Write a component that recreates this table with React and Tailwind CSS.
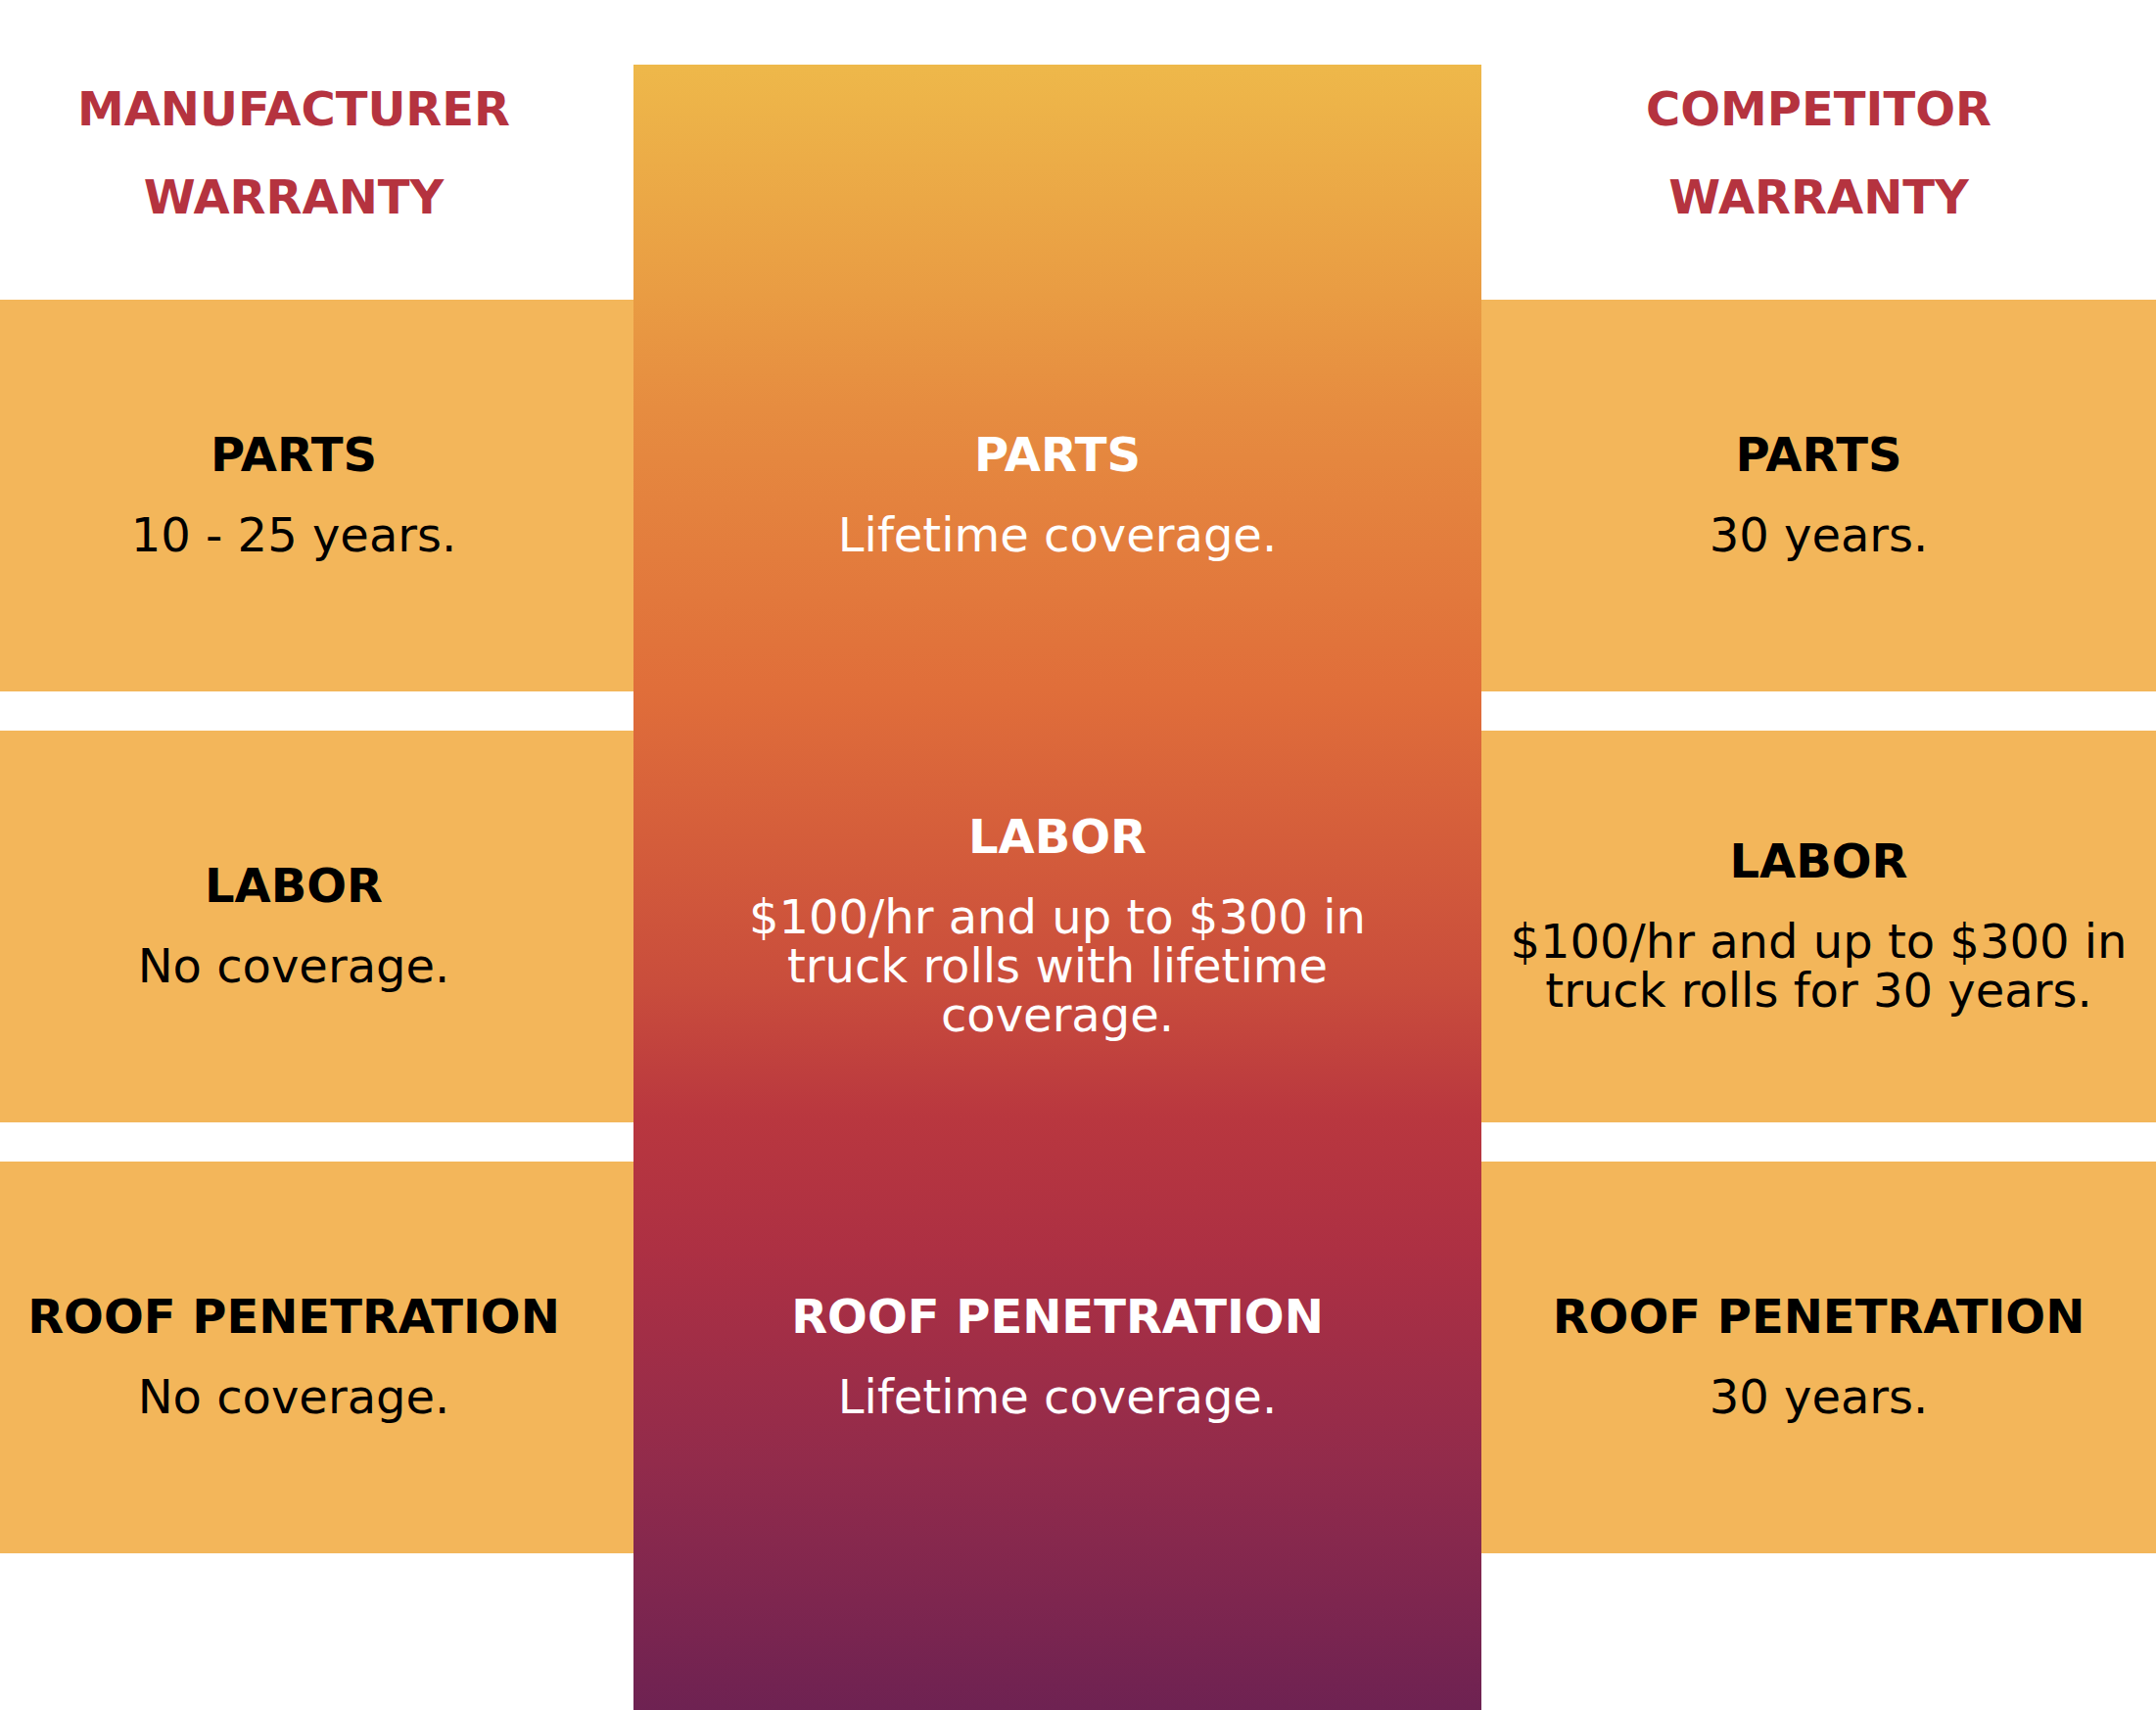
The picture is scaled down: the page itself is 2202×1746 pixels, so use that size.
export default function App() {
  const rows = [
    {
      title: "PARTS",
      left: ["10 - 25 years."],
      mid: ["Lifetime coverage."],
      right: ["30 years."],
    },
    {
      title: "LABOR",
      left: ["No coverage."],
      mid: ["$100/hr and up to $300 in", "truck rolls with lifetime", "coverage."],
      right: ["$100/hr and up to $300 in", "truck rolls for 30 years."],
    },
    {
      title: "ROOF PENETRATION",
      left: ["No coverage."],
      mid: ["Lifetime coverage."],
      right: ["30 years."],
    },
  ];

  const Cell = ({ title, lines, dark }) => (
    <div className="flex h-[400px] flex-col items-center justify-center pb-[8px] text-center">
      <div
        className={`text-[48px] font-bold leading-[60px] mb-[27px] ${dark ? "text-white" : "text-black"}`}
      >
        {title}
      </div>
      <div className={`text-[48px] font-normal leading-[50px] ${dark ? "text-white" : "text-black"}`}>
        {lines.map((l, i) => (
          <div key={i} className="whitespace-nowrap">
            {l}
          </div>
        ))}
      </div>
    </div>
  );

  const Header = ({ a, b }) => (
    <div className="flex h-[306px] flex-col items-center justify-center pt-[6px] text-center text-[48px] font-bold leading-[90px] text-[#b5333f]">
      <div>{a}</div>
      <div>{b}</div>
    </div>
  );

  return (
    <div className="flex h-[1746px] w-[2202px] overflow-hidden bg-white [font-family:'DejaVu_Sans',sans-serif]">
      <div className="w-[647px] shrink-0">
        <div className="pr-[47px]">
          <Header a="MANUFACTURER" b="WARRANTY" />
        </div>
        <div className="flex flex-col gap-[40px]">
          {rows.map((r, i) => (
            <div key={i} className="bg-[#f3b65a] pr-[47px]">
              <Cell title={r.title} lines={r.left} />
            </div>
          ))}
        </div>
      </div>

      <div className="w-[866px] shrink-0 pt-[66px]">
        <div className="h-[1680px] bg-[linear-gradient(180deg,#eeb84a_0%,#e99c43_14%,#e68c40_21%,#e06e3a_38%,#c94d3c_56%,#b9373f_64%,#ad3043_72%,#922b4b_85%,#6e2252_100%)]">
          <div className="h-[240px]" />
          <div className="flex flex-col gap-[40px]">
            {rows.map((r, i) => (
              <Cell key={i} title={r.title} lines={r.mid} dark />
            ))}
          </div>
        </div>
      </div>

      <div className="w-[689px] shrink-0">
        <Header a="COMPETITOR" b="WARRANTY" />
        <div className="flex flex-col gap-[40px]">
          {rows.map((r, i) => (
            <div key={i} className="bg-[#f3b65a]">
              <Cell title={r.title} lines={r.right} />
            </div>
          ))}
        </div>
      </div>
    </div>
  );
}
